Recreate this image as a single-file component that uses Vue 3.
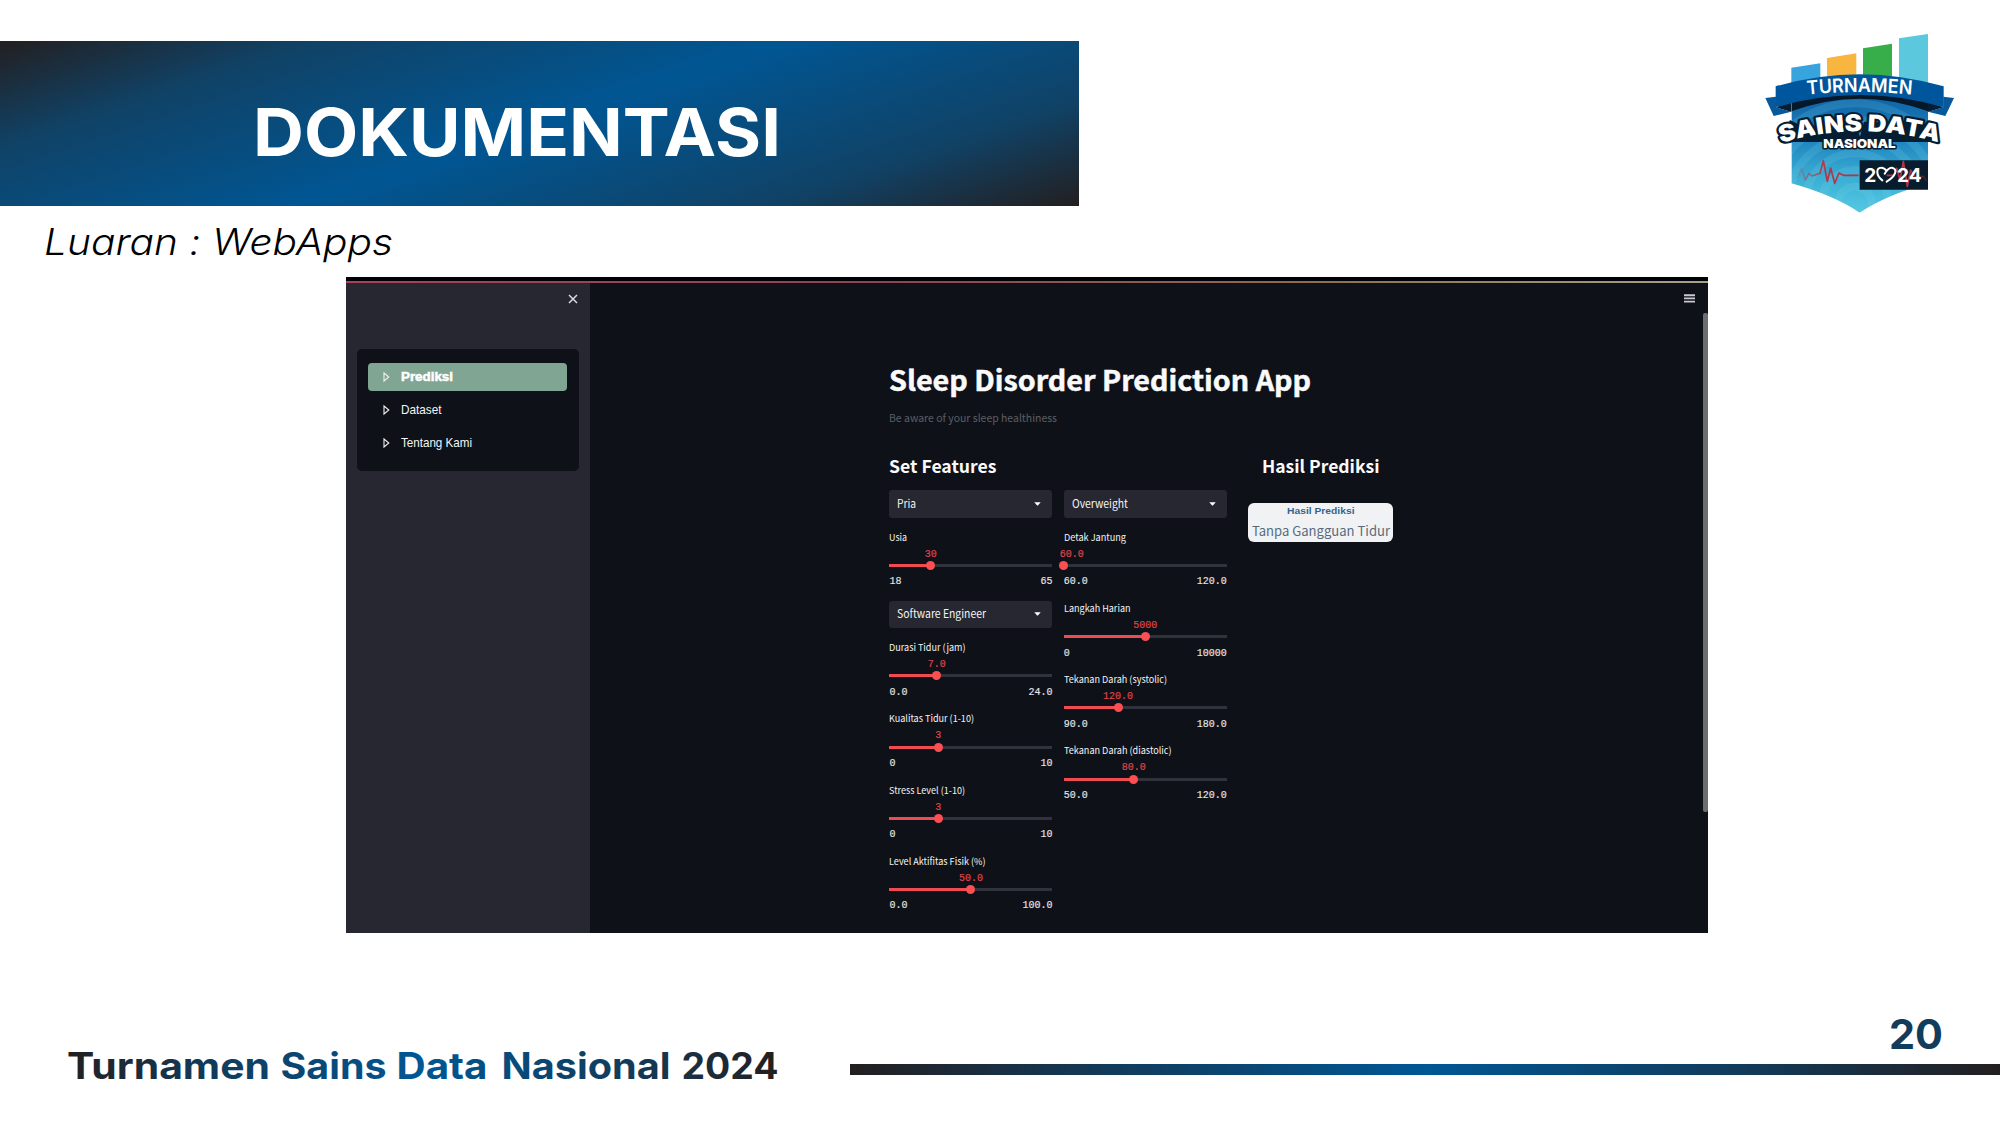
<script setup>
import { h } from 'vue'

// Single line of text fitted to a given width; `b` is the baseline inside a box of height `h`.
const Line = (p) =>
  h('svg', { class: 'line', width: p.w, height: p.h, style: { fontSize: p.s + 'px' } }, [
    h('text', { x: 0, y: p.b, textLength: p.w, lengthAdjust: 'spacingAndGlyphs' }, p.t),
  ])
Line.props = ['t', 'w', 'h', 'b', 's']

const menu = [
  { label: 'Prediksi', w: 52, active: true },
  { label: 'Dataset', w: 40.5 },
  { label: 'Tentang Kami', w: 71 },
]

const eventWords = [
  { t: 'Turnamen', x: 0, w: 203 },
  { t: 'Sains', x: 213.5, w: 106 },
  { t: 'Data', x: 329.5, w: 91 },
  { t: 'Nasional', x: 434.5, w: 169 },
  { t: '2024', x: 614.5, w: 97 },
]

const columns = [
  [
    { select: 'Pria', w: 19 },
    { label: 'Usia', w: 18, value: '30', min: '18', max: '65', at: 25.4 },
    { select: 'Software Engineer', w: 89 },
    { label: 'Durasi Tidur (jam)', w: 76.5, value: '7.0', min: '0.0', max: '24.0', at: 29.1 },
    { label: 'Kualitas Tidur (1-10)', w: 85, value: '3', min: '0', max: '10', at: 30 },
    { label: 'Stress Level (1-10)', w: 76, value: '3', min: '0', max: '10', at: 30 },
    { label: 'Level Aktifitas Fisik (%)', w: 96.5, value: '50.0', min: '0.0', max: '100.0', at: 50 },
  ],
  [
    { select: 'Overweight', w: 56 },
    { label: 'Detak Jantung', w: 62, value: '60.0', min: '60.0', max: '120.0', at: 0 },
    { label: 'Langkah Harian', w: 66.5, value: '5000', min: '0', max: '10000', at: 50 },
    { label: 'Tekanan Darah (systolic)', w: 103, value: '120.0', min: '90.0', max: '180.0', at: 33.4 },
    { label: 'Tekanan Darah (diastolic)', w: 107.5, value: '80.0', min: '50.0', max: '120.0', at: 43 },
  ],
]
</script>

<template>
  <div class="slide">
    <header class="top">
      <div class="heading">
        <div class="banner"><Line t="DOKUMENTASI" :w="528" :h="70" :b="60.5" :s="65.5" /></div>
        <div class="subtitle"><Line t="Luaran : WebApps" :w="349" :h="44" :b="34" :s="37" /></div>
      </div>
      <svg class="logo" width="240" height="200" viewBox="0 0 720 600">
        <defs>
          <linearGradient id="shield" x1="0" y1="0" x2="0" y2="1">
            <stop offset="0" stop-color="#0f62a3" />
            <stop offset=".35" stop-color="#1c80bd" />
            <stop offset=".7" stop-color="#3aaed3" />
            <stop offset="1" stop-color="#55c9e2" />
          </linearGradient>
          <clipPath id="shieldClip"><path d="M154 225H564V490Q440 525 359 578Q280 525 154 490Z" /></clipPath>
          <path id="arcTop" d="M202 224Q360 208 516 224" />
          <path id="arcMain" d="M122 369Q240 334 359 334Q480 334 600 369" />
          <linearGradient id="pulse" x1="0" x2="1"><stop offset="0" stop-color="#b43447" stop-opacity=".15" /><stop offset=".22" stop-color="#b43447" /><stop offset=".85" stop-color="#b43447" /><stop offset="1" stop-color="#b43447" stop-opacity=".2" /></linearGradient>
        </defs>
        <path fill="#37a4dd" d="M154 143L241 130V200H154Z" />
        <path fill="#f8b640" d="M261 114L349 100V190H261Z" />
        <path fill="#38ae4b" d="M369 85L456 71V190H369Z" />
        <path fill="#5bc8dd" d="M477 55L564 42V200H477Z" />
        <g clip-path="url(#shieldClip)">
          <path fill="url(#shield)" d="M154 225H564V578H154Z" />
          <g fill="none" stroke="#7fd8ec" stroke-opacity=".17" stroke-width="24">
            <circle cx="345" cy="550" r="50" /><circle cx="345" cy="550" r="100" /><circle cx="345" cy="550" r="150" />
            <circle cx="345" cy="550" r="200" /><circle cx="345" cy="550" r="250" /><circle cx="345" cy="550" r="300" />
          </g>
          <path fill="#05192b" d="M154 246Q360 202 564 246V274Q360 198 154 274Z" />
        </g>
        <path fill="#071d31" d="M107 262L154 246V276ZM611 262L564 246V276Z" />
        <path fill="#07599c" d="M76 234L108 230V262L154 275L101 288ZM642 234L610 230V262L564 275L616 288Z" />
        <path fill="#00569c" d="M107 199Q360 126 611 199V262Q360 188 107 262Z" />
        <path fill="#071d31" d="M150 300L190 320L345 305L360 350L372 305L540 310L592 366H120Z" />
        <text class="logo-medium" fill="#fff" font-size="58"><textPath href="#arcTop" textLength="314" lengthAdjust="spacingAndGlyphs">TURNAMEN</textPath></text>
        <text class="logo-black outlined" font-size="70"><textPath href="#arcMain" textLength="480" lengthAdjust="spacingAndGlyphs">SAINS DATA</textPath></text>
        <text class="logo-black outlined thin" x="250" y="384" font-size="37" textLength="217" lengthAdjust="spacingAndGlyphs">NASIONAL</text>
        <path fill="#081c2d" d="M359 421H564V509H359Z" />
        <path fill="none" stroke="url(#pulse)" stroke-width="5" stroke-linejoin="round" d="M172 474L185 446L196 480L207 460L216 468L240 460L250 422L262 484L272 444L284 490L297 459L310 466H356M440 466H462L470 445L480 480L490 424L502 499L512 450L524 470H552L560 484" />
        <text class="logo-bold" fill="#fff" x="373" y="485" font-size="57" textLength="36" lengthAdjust="spacingAndGlyphs">2</text>
        <path fill="none" stroke="#fff" stroke-width="6" stroke-linecap="round" d="M427 481C407 466 408 443 423 443Q432 442 440 453M434 461Q445 442 456 443C475 447 467 469 440 485" />
        <text class="logo-bold" fill="#fff" x="471" y="485" font-size="57" textLength="74" lengthAdjust="spacingAndGlyphs">24</text>
      </svg>
    </header>

    <main class="app">
      <div class="loadbar"></div>
      <div class="body">
        <aside class="sidebar">
          <svg class="close" width="10" height="10" viewBox="0 0 10 10"><path d="M1 1L9 9M9 1L1 9" /></svg>
          <nav class="menu">
            <div v-for="m in menu" :key="m.label" class="item" :class="{ active: m.active }">
              <svg class="caret" width="7" height="10" viewBox="0 0 7 10"><path d="M1 1L5.8 5L1 9Z" /></svg>
              <Line :t="m.label" :w="m.w" :h="18" :b="13" :s="12.4" />
            </div>
          </nav>
        </aside>
        <section class="content">
          <Line class="title" t="Sleep Disorder Prediction App" :w="422" :h="40" :b="30" :s="27.5" />
          <Line class="tagline" t="Be aware of your sleep healthiness" :w="168" :h="18" :b="13" :s="10.8" />
          <div class="panes">
            <div class="features">
              <Line class="sub" t="Set Features" :w="107.5" :h="26" :b="19" :s="17.4" />
              <div class="columns">
                <div v-for="(col, i) in columns" :key="i" class="column">
                  <template v-for="(f, j) in col" :key="j">
                    <div v-if="f.select" class="select">
                      <Line :t="f.select" :w="f.w" :h="20" :b="14.4" :s="11.4" />
                      <svg width="7" height="4" viewBox="0 0 7 4"><path fill="#fff" d="M.3 .2H6.7L3.9 3.6H3.1Z" /></svg>
                    </div>
                    <div v-else class="slider">
                      <Line class="label" :t="f.label" :w="f.w" :h="18" :b="15.3" :s="9.6" />
                      <div class="value"><span :class="{ edge: f.at === 0 }" :style="{ left: f.at + '%' }">{{ f.value }}</span></div>
                      <div class="track">
                        <div class="fill" :style="{ width: f.at + '%' }"></div>
                        <div class="thumb"></div>
                      </div>
                      <div class="range"><span>{{ f.min }}</span><span>{{ f.max }}</span></div>
                    </div>
                  </template>
                </div>
              </div>
            </div>
            <div class="result">
              <Line class="sub" t="Hasil Prediksi" :w="117.5" :h="26" :b="19" :s="17.4" />
              <div class="card">
                <Line class="card-title" t="Hasil Prediksi" :w="67.5" :h="16" :b="11.3" :s="9.8" />
                <Line class="card-text" t="Tanpa Gangguan Tidur" :w="138" :h="22" :b="17" :s="13.2" />
              </div>
            </div>
          </div>
        </section>
        <div class="rail">
          <svg width="11" height="9" viewBox="0 0 11 9"><path d="M0 1.2H11M0 4.4H11M0 7.6H11" /></svg>
          <div class="scroll"></div>
        </div>
      </div>
    </main>

    <footer class="foot">
      <svg class="event" width="713" height="50">
        <linearGradient id="ink" gradientUnits="userSpaceOnUse" x1="0" x2="708" y1="0" y2="0">
          <stop offset="0" stop-color="#231f20" /><stop offset=".2" stop-color="#123a59" /><stop offset=".5" stop-color="#005794" />
          <stop offset=".8" stop-color="#123a59" /><stop offset="1" stop-color="#231f20" />
        </linearGradient>
        <text v-for="e in eventWords" :key="e.t" :x="e.x" y="37.8" :textLength="e.w" lengthAdjust="spacingAndGlyphs">{{ e.t }}</text>
      </svg>
      <div class="pager">
        <Line class="number" t="20" :w="54" :h="48" :b="37.3" :s="41" />
        <div class="rule"></div>
      </div>
    </footer>
  </div>
</template>

<style>
body { margin: 0; background: #fff; }
</style>

<style scoped>
.slide { width: 2000px; height: 1125px; display: flex; flex-direction: column; background: #fff; font-family: Inter, sans-serif; overflow: hidden; }
.slide svg { display: block; flex: none; overflow: visible; }
.line { fill: currentColor; }
.top { height: 277px; flex: none; display: flex; justify-content: space-between; }
.heading { padding-top: 41px; }
.banner { box-sizing: border-box; width: 1079px; height: 165px; padding: 54px 0 0 253px; color: #fff; font-weight: 700; background: linear-gradient(161.4deg, #231f20 0%, #104266 20%, #005693 50%, #104266 80%, #231f20 100%); }
.subtitle { padding: 15px 0 0 44px; color: #000; font-style: italic; font-weight: 350; font-feature-settings: "calt" 0; }
.logo { margin: 20px 20px 0 0; font-family: Inter, sans-serif; }
.logo-medium { font-weight: 600; }
.logo-bold { font-weight: 700; }
.logo-black { font-weight: 900; fill: #fff; }
.outlined { stroke: #071d31; stroke-width: 13px; paint-order: stroke; stroke-linejoin: round; }
.outlined.thin { stroke-width: 9px; }

.app { width: 1362px; height: 655.5px; flex: none; margin-left: 346px; background: #0e1118; display: flex; flex-direction: column; font-family: "Noto Sans CJK SC", "Noto Sans", sans-serif; color: #f5f5f5; }
.loadbar { height: 2px; flex: none; border-top: 4px solid #000007; background: linear-gradient(90deg, #a4445c, #8f4352 40%, #8c6c50 70%, #a7a284) padding-box; }
.body { flex: 1; display: flex; min-height: 0; }
.sidebar { flex: none; width: 244.4px; background: #262730; padding-top: 10.8px; box-sizing: border-box; font-family: "Liberation Sans", sans-serif; }
.close { margin-left: 221.8px; fill: none; stroke: #dcdce0; stroke-width: 1.5; }
.menu { box-sizing: border-box; width: 222px; height: 122.7px; margin: 45px 0 0 10.7px; padding: 14px 11.5px; border-radius: 5px; background: #0e1118; display: flex; flex-direction: column; gap: 5px; }
.item { height: 28px; flex: none; display: flex; align-items: center; gap: 11px; padding-left: 15px; border-radius: 4px; }
.item.active { background: #80a593; color: #fff; font-weight: 700; }
.item.active .line { stroke: #fff; stroke-width: .5; }
.caret { fill: none; stroke: #eee; stroke-width: 1.1; }
.content { flex: 1; padding: 78px 0 0 299px; }
.tagline { margin-top: 8px; color: #5c5e63; }
.title, .sub { font-weight: 700; color: #fafafa; }
.title { stroke: #fafafa; stroke-width: .5; }
.panes { display: flex; gap: 21.3px; margin-top: 27px; }
.columns { display: flex; gap: 11.3px; margin-top: 10.2px; }
.column { width: 163px; }
.select { box-sizing: border-box; height: 27.4px; display: flex; align-items: center; justify-content: space-between; padding: 0 11px 0 8px; border-radius: 3px; background: #262730; margin-bottom: 8.3px; }
.slider + .select { margin-top: 3.5px; }
.slider { height: 71.2px; font-family: "Liberation Mono", monospace; font-size: 10px; line-height: 12px; }
.label { font-family: "Noto Sans CJK SC", "Noto Sans", sans-serif; }
.value { position: relative; height: 17.2px; color: #e2454d; -webkit-text-stroke: .15px #e2454d; }
.value span { position: absolute; top: 5px; transform: translateX(-50%); }
.value .edge { transform: translateX(-4px); }
.track { height: 9px; display: flex; align-items: center; background: linear-gradient(#31333c, #31333c) center / 100% 3px no-repeat; }
.fill { height: 3px; background: #f04b50; }
.thumb { width: 9px; height: 9px; flex: none; margin: 0 -4.5px; border-radius: 50%; background: #fb4f52; }
.range { display: flex; justify-content: space-between; padding-top: 6.4px; color: #e6e6e6; -webkit-text-stroke: .15px #e6e6e6; }
.result { width: 145.5px; display: flex; flex-direction: column; align-items: center; }
.card { box-sizing: border-box; width: 145px; height: 39px; margin-top: 22.9px; border-radius: 6px; background: #f1f2f4; display: flex; flex-direction: column; align-items: center; }
.card-title { font-family: "Liberation Sans", sans-serif; font-weight: 700; color: #34648f; }
.card-text { color: #586b7c; }
.rail { flex: none; width: 24px; padding-top: 10.8px; }
.rail svg { stroke: #c8c9cb; stroke-width: 1.9; }
.scroll { width: 5.5px; height: 499px; margin: 10.2px 0 0 18.5px; border-radius: 2px; background: #6b6d6f; }

.foot { flex: 1; display: flex; align-items: flex-start; padding: 79px 0 0 66.5px; font-weight: 700; }
.event { fill: url(#ink); margin-top: 29px; font-size: 36.2px; }
.pager { flex: 1; margin-left: 70.5px; }
.number { margin-left: 1038.5px; color: #123c5b; }
.rule { height: 11px; margin-top: 4px; background: linear-gradient(90deg, #231f20, #123a59 22%, #005794 50%, #123a59 78%, #231f20); }
</style>
